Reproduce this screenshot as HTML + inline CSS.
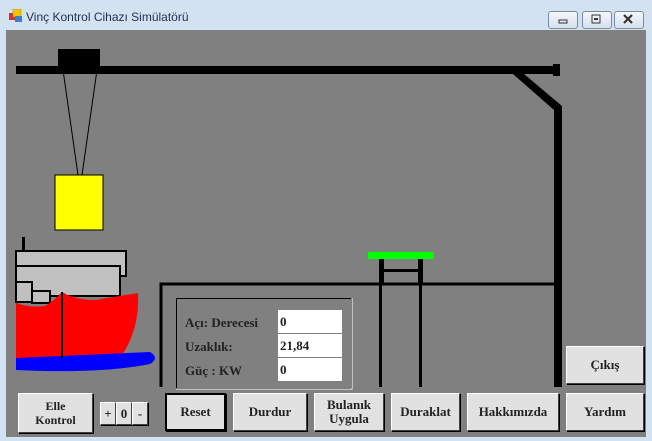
<!DOCTYPE html>
<html><head><meta charset="utf-8"><style>
body{margin:0;width:652px;height:441px;background:#d3e2f1;font-family:"Liberation Serif",serif;position:relative;overflow:hidden}
.t{position:absolute;left:26px;top:10px;font:12px "Liberation Sans",sans-serif;color:#1e3050}
.wb{position:absolute;top:11px;width:28px;height:16px;border:1px solid #7a8aa0;border-radius:3px;background:linear-gradient(#f4f7fb,#d6e0ec)}
.cv{position:absolute;left:6px;top:30px;width:640px;height:407px;background:#808080}
.b{position:absolute;background:#e1e1e1;border:1px solid #fff;border-right-color:#404040;border-bottom-color:#404040;box-shadow:1px 1px 0 #000;font-weight:bold;font-size:13px;color:#222;display:flex;align-items:center;justify-content:center;text-align:center;line-height:14px;box-sizing:border-box}
.f{position:absolute;left:278px;width:64px;height:23px;background:#fff;font-weight:bold;font-size:13px;color:#222;line-height:23px;padding-left:2px;box-sizing:border-box}
.l{position:absolute;left:185px;font-weight:bold;font-size:13px;color:#222}
</style></head><body>
<svg style="position:absolute;left:9px;top:9px" width="14" height="14"><rect x="0" y="4" width="7" height="7" fill="#c33"/><rect x="4" y="0" width="8" height="8" fill="#f5c400" stroke="#a80" stroke-width=".5"/><rect x="6" y="7" width="7" height="6" fill="#3a7fd0"/></svg>
<div class="t">Vinç Kontrol Cihazı Simülatörü</div>
<div class="wb" style="left:548px"></div><div class="wb" style="left:582px"></div><div class="wb" style="left:614px"></div>
<svg style="position:absolute;left:548px;top:11px" width="96" height="18">
<rect x="11" y="9" width="8" height="3" fill="none" stroke="#333"/>
<rect x="44" y="4" width="8" height="8" fill="none" stroke="#333"/><rect x="46" y="7" width="4" height="2" fill="#333"/>
<path d="M76 4 L84 12 M84 4 L76 12" stroke="#333" stroke-width="2.2"/>
</svg>
<div class="cv"></div>
<svg style="position:absolute;left:0;top:0" width="652" height="441">
<rect x="16" y="66" width="542" height="8" fill="#000"/>
<rect x="553" y="64" width="7" height="12" fill="#000"/>
<polygon points="513,74 524,74 562,106 562,112 554,112 554,110" fill="#000"/>
<rect x="554" y="107" width="8" height="280" fill="#000"/>
<rect x="58" y="49" width="42" height="20" fill="#000"/>
<line x1="63" y1="70" x2="78" y2="175" stroke="#000"/><line x1="97" y1="70" x2="82" y2="175" stroke="#000"/>
<rect x="55" y="175" width="48" height="55" fill="#ff0" stroke="#000"/>
<rect x="22" y="237" width="3" height="16" fill="#000"/>
<rect x="16" y="251" width="110" height="25" fill="#c0c0c0" stroke="#000" stroke-width="2"/>
<rect x="16" y="266" width="104" height="30" fill="#c0c0c0" stroke="#000" stroke-width="2"/>
<rect x="16" y="282" width="16" height="20" fill="#c0c0c0" stroke="#000" stroke-width="2"/>
<rect x="32" y="291" width="18" height="12" fill="#c0c0c0" stroke="#000" stroke-width="2"/>
<path d="M16 303 Q30 308 45 306 Q55 300 62 292 Q75 300 95 300 Q120 296 138 293 Q140 330 120 358 L16 358 Z" fill="#f00"/>
<path d="M16 358 L150 352 Q160 358 150 364 Q100 374 16 370 Z" fill="#0000ff"/>
<rect x="61" y="292" width="2" height="66" fill="#000"/>
<path d="M161 387 V284 H556" stroke="#000" stroke-width="3" fill="none"/>
<rect x="176.5" y="298.5" width="175" height="90" fill="none" stroke="#000"/>
<path d="M352 298 V389 H176" stroke="#fff" fill="none"/>
<rect x="368" y="252" width="66" height="7" fill="#0f0"/>
<rect x="379" y="259" width="5" height="25" fill="#000"/><rect x="418" y="259" width="5" height="25" fill="#000"/>
<rect x="384" y="269" width="34" height="3" fill="#000"/>
<rect x="379" y="284" width="3" height="103" fill="#000"/><rect x="419" y="284" width="3" height="103" fill="#000"/>
</svg>
<div class="l" style="top:315px">Açı: Derecesi</div>
<div class="l" style="top:339px">Uzaklık:</div>
<div class="l" style="top:363px">Güç : KW</div>
<div class="f" style="top:310px">0</div>
<div class="f" style="top:334px">21,84</div>
<div class="f" style="top:358px">0</div>
<div class="b" style="left:18px;top:393px;width:75px;height:40px;font-size:12px">Elle<br>Kontrol</div>
<div class="b" style="left:100px;top:402px;width:16px;height:23px">+</div>
<div class="b" style="left:116px;top:402px;width:16px;height:23px">0</div>
<div class="b" style="left:132px;top:402px;width:16px;height:23px">-</div>
<div class="b" style="left:165px;top:393px;width:61px;height:38px;border:2px solid #000">Reset</div>
<div class="b" style="left:233px;top:393px;width:74px;height:38px">Durdur</div>
<div class="b" style="left:314px;top:393px;width:70px;height:38px">Bulanık<br>Uygula</div>
<div class="b" style="left:391px;top:393px;width:69px;height:38px">Duraklat</div>
<div class="b" style="left:467px;top:393px;width:92px;height:38px">Hakkımızda</div>
<div class="b" style="left:566px;top:393px;width:78px;height:38px">Yardım</div>
<div class="b" style="left:566px;top:346px;width:78px;height:38px">Çıkış</div>
</body></html>
